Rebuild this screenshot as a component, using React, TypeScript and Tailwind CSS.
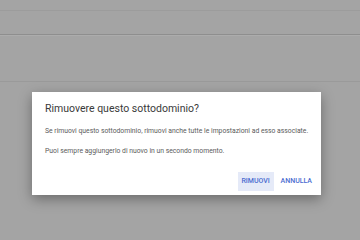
export default function App() {
  return (
    <div
      className="relative h-[240px] w-[360px] overflow-hidden bg-[#a4a4a4]"
      style={{ fontFamily: "Roboto, 'Liberation Sans', sans-serif" }}
    >
      {/* page behind the overlay */}
      <div className="flex flex-col">
        <div className="h-[11px] border-b border-[#9c9c9c]" />
        <div className="h-[24px] border-b border-[#8e8e8e]" />
        <div className="h-[47px] border-t border-[#acacac] border-b border-b-[#9a9a9a]" />
      </div>

      {/* dialog */}
      <div className="absolute left-[32px] top-[92px] flex h-[103px] w-[289px] flex-col bg-white shadow-[0_4px_12px_rgba(0,0,0,0.35)]">
        <div className="px-[13px] pt-[10px] text-[10.5px] leading-[14px] text-[#3a3a3a]">
          Rimuovere questo sottodominio?
        </div>
        <div className="mt-[11px] flex flex-col gap-[12px] whitespace-nowrap px-[13px] text-[6.8px] leading-[8px] text-[#5a5a5a]">
          <p>Se rimuovi questo sottodominio, rimuovi anche tutte le impostazioni ad esso associate.</p>
          <p>Puoi sempre aggiungerlo di nuovo in un secondo momento.</p>
        </div>
        <div className="mt-auto mb-[4px] flex items-center justify-end gap-[3px] pr-[5px]">
          <button className="h-[19px] w-[36px] bg-[#e5eaf8] text-[7px] font-medium text-[#4a6cd0]">
            RIMUOVI
          </button>
          <button className="h-[19px] px-[4px] text-[7px] font-medium text-[#4a6cd0]">
            ANNULLA
          </button>
        </div>
      </div>
    </div>
  );
}
